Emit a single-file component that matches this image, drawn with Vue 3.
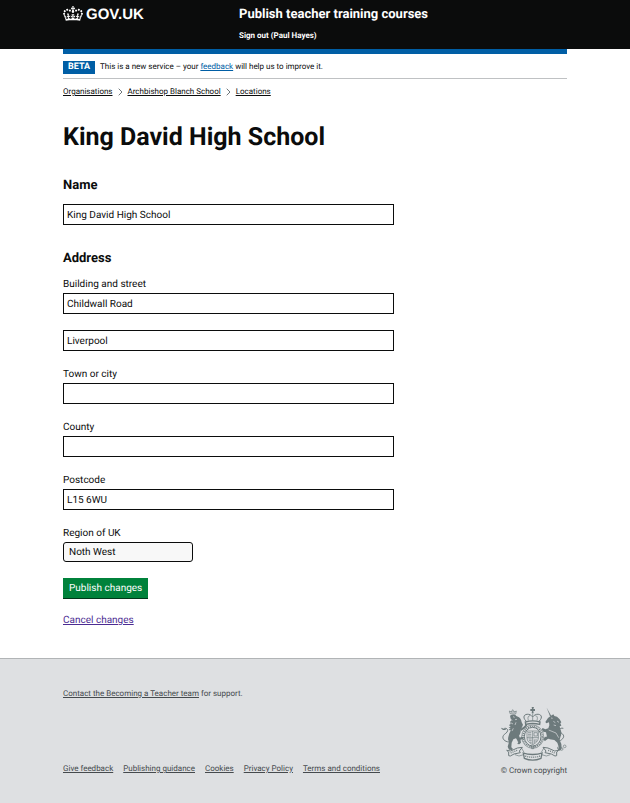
<script setup>
import { reactive } from 'vue'

const form = reactive({
  name: 'King David High School',
  street: 'Childwall Road',
  street2: 'Liverpool',
  town: '',
  county: '',
  postcode: 'L15 6WU',
  region: 'Noth West',
})

const breadcrumbs = ['Organisations', 'Archbishop Blanch School', 'Locations']
const addressFields = [
  { key: 'town', label: 'Town or city' },
  { key: 'county', label: 'County' },
  { key: 'postcode', label: 'Postcode' },
]
const footerLinks = ['Give feedback', 'Publishing guidance', 'Cookies', 'Privacy Policy', 'Terms and conditions']
</script>

<template>
  <div class="page">
    <header class="header">
      <div class="container header-grid">
        <a class="logo" href="#">
          <svg class="crown" viewBox="0 0 132 97" aria-hidden="true">
            <path fill="currentColor" fill-rule="evenodd" d="M25 30.2c3.5 1.5 7.7-.2 9.1-3.7 1.5-3.6-.2-7.8-3.9-9.2-3.6-1.4-7.6.3-9.1 3.9-1.4 3.5.3 7.5 3.9 9zM9 39.5c3.6 1.5 7.8-.2 9.2-3.7 1.5-3.6-.2-7.8-3.9-9.1-3.6-1.5-7.6.2-9.1 3.8-1.4 3.5.3 7.5 3.8 9zM4.4 57.2c3.5 1.5 7.7-.2 9.1-3.8 1.5-3.6-.2-7.7-3.9-9.1-3.5-1.5-7.6.3-9.1 3.8-1.4 3.5.3 7.6 3.9 9.1zm38.3-21.4c3.5 1.5 7.7-.2 9.1-3.8 1.5-3.6-.2-7.7-3.9-9.1-3.6-1.5-7.6.3-9.1 3.8-1.3 3.6.4 7.7 3.9 9.1zm64.4-5.6c-3.6 1.5-7.8-.2-9.1-3.7-1.5-3.6.2-7.8 3.8-9.2 3.6-1.4 7.7.3 9.2 3.9 1.3 3.5-.4 7.5-3.9 9zm15.9 9.3c-3.6 1.5-7.7-.2-9.1-3.7-1.5-3.6.2-7.8 3.7-9.1 3.6-1.5 7.7.2 9.2 3.8 1.5 3.5-.3 7.5-3.8 9zm4.7 17.7c-3.6 1.5-7.8-.2-9.2-3.8-1.5-3.6.2-7.7 3.9-9.1 3.6-1.5 7.7.3 9.2 3.8 1.3 3.5-.4 7.6-3.9 9.1zM89.3 35.8c-3.6 1.5-7.8-.2-9.2-3.8-1.4-3.6.2-7.7 3.9-9.1 3.6-1.5 7.7.3 9.2 3.8 1.4 3.6-.3 7.7-3.9 9.1zM69.7 17.7l8.9 4.7V9.3l-8.9 2.8c-.2-.3-.5-.6-.9-.9L72.4 0H59.6l3.5 11.2c-.3.3-.6.5-.9.9l-8.8-2.8v13.1l8.8-4.7c.3.3.6.7.9.9l-5 15.4v.1c-.2.8-.4 1.6-.4 2.4 0 4.1 3.1 7.5 7 8.1h.2c.3 0 .7.1 1 .1.4 0 .7 0 1-.1h.2c4-.6 7.1-4.1 7.1-8.1 0-.8-.1-1.7-.4-2.4V34l-5.1-15.4c.4-.2.7-.6 1-.9zM66 92.8c16.9 0 32.8 1.1 47.1 3.2 4-16.9 8.9-26.7 14-33.5l-9.6-3.4c1 4.9 1.1 7.2 0 10.2-1.5-1.4-3-4.3-4.2-8.7L108.6 76c2.8-2 5-3.2 7.5-3.3-4.4 9.4-10 11.9-13.6 11.2-4.3-.8-6.3-4.6-5.6-7.9 1-4.7 5.7-5.9 8-.5 4.3-8.7-3-11.4-7.6-8.8 7.1-7.2 7.9-13.5 2.1-21.1-8 6.1-8.1 12.3-4.5 20.8-4.7-5.4-12.1-2.5-9.5 6.2 3.4-5.2 7.9-2 7.2 3.1-.6 4.3-6.4 7.8-13.5 7.2-10.3-.9-10.9-8-11.2-13.8 2.5-.5 7.1 1.8 11 7.3L80.2 60c-4.1 4.4-8 5.3-12.3 5.4 1.4-4.4 8-11.6 8-11.6H55.5s6.4 7.2 7.9 11.6c-4.2-.1-8-1-12.3-5.4l1.4 16.4c3.9-5.5 8.5-7.7 10.9-7.3-.3 5.8-.9 12.8-11.1 13.8-7.2.6-12.9-2.9-13.5-7.2-.7-5 3.8-8.3 7.1-3.1 2.7-8.7-4.6-11.6-9.4-6.2 3.7-8.5 3.6-14.7-4.6-20.8-5.8 7.6-5 13.9 2.2 21.1-4.7-2.6-11.9.1-7.7 8.8 2.3-5.5 7.1-4.2 8.1.5.7 3.3-1.3 7.1-5.7 7.9-3.5.7-9-1.8-13.5-11.2 2.5.1 4.7 1.3 7.5 3.3l-4.7-15.4c-1.2 4.4-2.7 7.2-4.3 8.7-1.1-3-.9-5.3 0-10.2l-9.5 3.4c5 6.9 9.9 16.7 14 33.5 14.8-2.1 30.8-3.2 47.7-3.2z" />
          </svg>
          <span>GOV.UK</span>
        </a>
        <div class="header-content">
          <a class="service" href="#">Publish teacher training courses</a>
          <a class="sign-out" href="#">Sign out (Paul Hayes)</a>
        </div>
      </div>
    </header>

    <div class="container">
      <div class="bar"></div>
      <div class="phase">
        <strong class="tag">BETA</strong>
        <span>This is a new service – your <a class="blue" href="#">feedback</a> will help us to improve it.</span>
      </div>
      <nav aria-label="Breadcrumb">
        <ol class="breadcrumbs">
          <li v-for="(crumb, i) in breadcrumbs" :key="crumb">
            <svg v-if="i > 0" class="chevron" viewBox="0 0 5 8" aria-hidden="true"><path d="M.7 .7 4 4 .7 7.3" /></svg>
            <a href="#">{{ crumb }}</a>
          </li>
        </ol>
      </nav>

      <main class="main">
        <form class="form" @submit.prevent>
          <h1>King David High School</h1>
          <h2><label for="name">Name</label></h2>
          <input id="name" v-model="form.name" class="input" type="text">

          <fieldset>
            <legend><h2>Address</h2></legend>
            <div class="group">
              <label for="street">Building and street</label>
              <input id="street" v-model="form.street" class="input" type="text">
            </div>
            <div class="group">
              <input id="street2" v-model="form.street2" class="input" type="text" aria-label="Building and street line 2">
            </div>
            <div v-for="field in addressFields" :key="field.key" class="group">
              <label :for="field.key">{{ field.label }}</label>
              <input :id="field.key" v-model="form[field.key]" class="input" type="text">
            </div>
            <div class="group">
              <label for="region">Region of UK</label>
              <select id="region" v-model="form.region" class="select">
                <option>Noth West</option>
              </select>
            </div>
          </fieldset>

          <button class="button" type="submit">Publish changes</button>
          <a class="cancel" href="#">Cancel changes</a>
        </form>
      </main>
    </div>

    <footer class="footer">
      <div class="container">
        <p class="support"><a href="#">Contact the Becoming a Teacher team</a> for support.</p>
        <div class="footer-row">
          <ul class="footer-links">
            <li v-for="link in footerLinks" :key="link"><a href="#">{{ link }}</a></li>
          </ul>
          <a class="copyright" href="#">
            <svg class="crest" viewBox="12 19 204 165" aria-hidden="true">
              <!-- lion -->
              <g class="line thin">
                <path d="M45 42l-2-8 6 3 4-7 5 7 6-3-2 9zM47 37h14" />
              </g>
              <g class="solid">
                <path d="M45 48c7-5 15-4 19 1l8 4c5 4 7 9 8 15l4 7-3 8-4 7c1 8-2 14-5 18l4 9 2 12-5 5-6-1 3-6-7-11-8 3-5 10-1 14 5 5-3 3-9-1-4-9 4-14-3-8c1-12 5-20 9-27-3 1-6 0-7-3l6-1-6-5 6-1-5-6 5-3-2-7 4-3-2-6z" />
                <path d="M76 88l10-7 8-8 3 4-6 8-13 9zM69 117l11-6 7 2-2 4-9 3-8 6z" />
                <path d="M18 84c2 5 6 8 13 7l4-5-8 1z" />
              </g>
              <path class="line" d="M42 127c-13-1-22-10-17-19 3-6 12-8 13-15 1-5-5-8-10-7" />
              <path class="gap" d="M54 51l5 2M60 60l6-1M45 58l7 4M47 69l7 4M63 68l-3 8M55 86l-4 8" />
              <!-- unicorn -->
              <g class="solid">
                <path d="M155 24l14 25-4 1z" />
                <path d="M159 55l9-7 7-4 3 5 8 2 8 8 5 9-3 3 3 7-5 2 2 8c4 7 4 17 0 25l-2 8 5 12 1 14-5 6-7-2 4-7-5-15-9-8-14-2-8-8-3-13-8-2-5-7 3-4 8 4 9-3 3-9-1-9-8 3-3-4z" />
                <path d="M149 112l15-3 6 6-12 3-8 6-5-4z" />
              </g>
              <path class="line" d="M188 126c13-4 21-13 17-20-4-7-12-7-12-14 0-5 6-8 12-6" />
              <path class="gap" d="M168 55l5 1M175 65l6 4M176 76l7 2M161 91l22 9 8 14M186 64l6 4" />
              <!-- royal crown -->
              <path class="solid" d="M110 22h7l-2 6h5v6h-5l1 7h-6l1-7h-5v-6h5z" />
              <path class="line" d="M93 64c-12-12-5-22 8-20 7 1 9 5 12 8 3-3 5-7 12-8 13-2 20 8 8 20" />
              <path class="line thin" d="M100 62c-3-9 0-14 5-14M126 62c3-9 0-14-5-14M113 41v22" />
              <path class="line thick" d="M91 67c13-4 31-4 44 0l-1 7c-13-3-29-3-42 0z" />
              <!-- garter and quartered shield -->
              <ellipse class="line thin" cx="113" cy="111" rx="33" ry="35" />
              <ellipse class="line" cx="113" cy="111" rx="25" ry="28" />
              <ellipse class="line thick dots" cx="113" cy="111" rx="29" ry="31" />
              <path class="line thin" d="M96 94h34v21c0 9-7 15-17 20-10-5-17-11-17-20zM113 94v40M96 114h34" />
              <path class="line thin" d="M99 99h10M99 104h10M99 109h10M117 99h10v10h-10zM118 119v11M123 118v9M101 118h9M102 123h8M105 128h5" />
              <path class="line thin" d="M108 139l5 4 5-4-2 8h-6z" />
              <!-- motto ribbon -->
              <path class="line" d="M41 157l-6-5 12 2 20-9 15-2-9 11 3 5-19 4-11 6-5-1zM185 157l6-5-12 2-20-9-15-2 9 11-3 5 19 4 11 6 5-1z" />
              <path class="line thick" d="M85 160c15 6 41 6 56 0l-3 16c-16 7-34 7-50 0z" />
              <path class="line thick dots" d="M47 160l22-9M179 160l-22-9M91 169c14 5 30 5 44 0" />
              <path class="line thin" d="M79 144l8 14M147 144l-8 14M60 165l12 4 14-4M166 165l-12 4-14-4" />
              <g class="line thin"><circle cx="200" cy="148" r="4" /><circle cx="209" cy="140" r="4" /><circle cx="190" cy="145" r="3" /></g>
            </svg>
            <span>© Crown copyright</span>
          </a>
        </div>
      </div>
    </footer>
  </div>
</template>

<style>
body {
  margin: 0;
  background: #fff;
}
</style>

<style scoped>
.page {
  display: flex;
  flex-direction: column;
  min-height: 100vh;
  font-family: Roboto, "Liberation Sans", sans-serif;
  font-size: 10px;
  line-height: 14px;
  color: #0b0c0c;
  text-rendering: geometricPrecision;
}
a {
  color: inherit;
  text-underline-offset: 1px;
}
.container {
  padding: 0 10%;
}
.header {
  background: #0b0c0c;
  color: #fff;
}
.header-grid {
  display: grid;
  grid-template-columns: 1fr 2fr;
  gap: 12px;
  height: 49px;
}
.header a {
  text-decoration: none;
  font-weight: 700;
}
.logo {
  display: flex;
  align-self: start;
  align-items: flex-start;
  gap: 3px;
  padding-top: 6px;
  font-family: "Liberation Sans", sans-serif;
  font-size: 15px;
  line-height: 18px;
}
.crown {
  width: 20px;
  height: 15px;
}
.header-content {
  display: flex;
  flex-direction: column;
  gap: 6px;
  padding-top: 7px;
}
.header .service {
  font-size: 13px;
  line-height: 16px;
}
.header .sign-out {
  font-size: 8px;
}
.bar {
  height: 5px;
  background: #005ea5;
}
.phase {
  display: flex;
  align-items: center;
  gap: 5px;
  padding: 6px 0 4px;
  border-bottom: 1px solid #bfc1c3;
  font-size: 8px;
}
.tag {
  padding: 0 5px;
  background: #005ea5;
  color: #fff;
  font-size: 9px;
  line-height: 13px;
}
.blue {
  color: #005ea5;
}
.breadcrumbs {
  display: flex;
  flex-wrap: wrap;
  margin: 0;
  padding: 6px 0 0;
  list-style: none;
  font-size: 8px;
}
.breadcrumbs li {
  display: flex;
  align-items: center;
}
.chevron {
  width: 5px;
  height: 8px;
  margin: 0 5px;
  fill: none;
  stroke: #6f777b;
}
.main {
  display: grid;
  grid-template-columns: 2fr 1fr;
  gap: 8px;
  padding: 24px 0 30px;
}
h1 {
  margin: 0 0 25px;
  font-size: 25px;
  line-height: 30px;
}
h2 {
  margin: 0 0 10px;
  font-size: 13px;
  line-height: 16px;
}
fieldset {
  min-width: 0;
  margin: 26px 0 0;
  padding: 0;
  border: 0;
}
legend {
  padding: 0;
}
.group {
  margin-bottom: 16px;
}
.group label {
  display: block;
  padding-top: 1px;
  margin-bottom: 1px;
}
.input,
.select {
  display: block;
  box-sizing: border-box;
  width: 100%;
  height: 21px;
  padding: 1px 3px 0;
  border: 1px solid #0b0c0c;
  border-radius: 0;
  background: #fff;
  font: inherit;
  color: inherit;
  text-rendering: inherit;
}
.select {
  width: 130px;
  height: 20px;
  padding: 1px 5px 0;
  border-radius: 3px;
  background: #f8f8f8;
  appearance: none;
}
.button {
  display: block;
  height: 21px;
  margin: 0 0 15px;
  padding: 0 6px;
  border: 0;
  background: #00823b;
  box-shadow: inset 0 -1px 0 #003618;
  color: #fff;
  font: inherit;
  text-rendering: inherit;
}
.cancel {
  color: #4c2c92;
}
.footer {
  flex: 1;
  border-top: 1px solid #b1b4b6;
  background: #dee0e2;
  color: #454a4d;
  font-size: 8px;
  line-height: 14px;
}
.support {
  margin: 0;
  padding-top: 28px;
}
.footer-row {
  display: flex;
  justify-content: space-between;
  align-items: flex-end;
  padding: 5px 0 24px;
}
.footer-links {
  display: flex;
  flex-wrap: wrap;
  gap: 0 10px;
  margin: 0;
  padding: 0 0 2px;
  list-style: none;
}
.copyright {
  display: flex;
  flex-direction: column;
  align-items: flex-end;
  gap: 3px;
  text-decoration: none;
}
.crest {
  width: 68px;
  height: 55px;
}
.solid {
  fill: #6d7a7c;
}
.line,
.gap {
  fill: none;
  stroke: #6d7a7c;
  stroke-width: 3;
}
.thick {
  stroke-width: 4;
}
.thin {
  stroke-width: 2;
}
.gap {
  stroke: #dee0e2;
  stroke-width: 2;
}
.dots {
  stroke-dasharray: 3 3;
}
</style>
